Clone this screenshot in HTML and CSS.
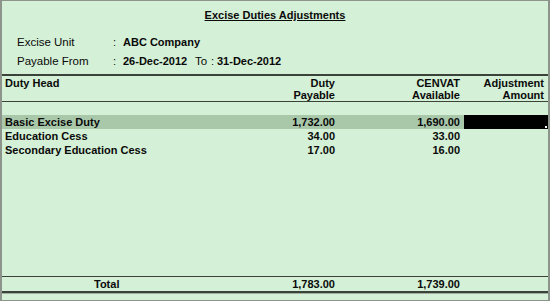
FILE: index.html
```html
<!DOCTYPE html>
<html lang="en">
<head>
  <meta charset="UTF-8">
  <title>Excise Duties Adjustments</title>
  <link rel="stylesheet" href="styles.css">
</head>
<body>
  <main class="screen">
    <header class="head">
      <h1 class="title">Excise Duties Adjustments</h1>
      <div class="info">
        <span class="label">Excise Unit</span>
        <span class="colon">:</span>
        <span class="value">ABC Company</span>
      </div>
      <div class="info">
        <span class="label">Payable From</span>
        <span class="colon">:</span>
        <span class="value from">26-Dec-2012</span>
        <span class="to">To</span>
        <span class="colon2">:</span>
        <span class="value">31-Dec-2012</span>
      </div>
    </header>

    <section class="cols">
      <div class="cell name">Duty Head</div>
      <div class="cell num">Duty<br>Payable</div>
      <div class="cell num">CENVAT<br>Available</div>
      <div class="cell num">Adjustment<br>Amount</div>
    </section>

    <section class="rows">
      <div class="row active">
        <div class="cell name">Basic Excise Duty</div>
        <div class="cell num">1,732.00</div>
        <div class="cell num">1,690.00</div>
        <div class="cell num input"></div>
      </div>
      <div class="row">
        <div class="cell name">Education Cess</div>
        <div class="cell num">34.00</div>
        <div class="cell num">33.00</div>
        <div class="cell num"></div>
      </div>
      <div class="row">
        <div class="cell name">Secondary Education Cess</div>
        <div class="cell num">17.00</div>
        <div class="cell num">16.00</div>
        <div class="cell num"></div>
      </div>
    </section>

    <footer class="total">
      <div class="cell name total-label">Total</div>
      <div class="cell num">1,783.00</div>
      <div class="cell num">1,739.00</div>
      <div class="cell num"></div>
    </footer>
    <div class="tail"></div>
  </main>
</body>
</html>
```

FILE: styles.css
```css
body {
  margin: 0;
  font-family: "Liberation Sans", Arial, sans-serif;
  font-size: 11px;
  color: #0a0a0a;
}
.screen {
  box-sizing: border-box;
  width: 550px;
  height: 301px;
  display: flex;
  flex-direction: column;
  background: #d4f0d6;
  border-top: 1px solid #8c948c;
  border-left: 2px solid #8c948c;
  border-right: 2px solid #8c948c;
  border-bottom: 1px solid #8c948c;
}
.head {
  height: 73px;
}
.title {
  margin: 7px 0 0;
  font-size: 11px;
  line-height: 14px;
  text-align: center;
  text-decoration: underline;
}
.info {
  display: flex;
  line-height: 19px;
  padding-left: 15px;
}
.title + .info {
  margin-top: 11px;
}
.label {
  width: 96px;
  font-size: 11.5px;
}
.colon {
  width: 10px;
}
.value {
  font-weight: bold;
}
.from {
  width: 72px;
}
.to {
  width: 16px;
  font-size: 11.5px;
}
.colon2 {
  width: 6px;
}

.cols,
.row,
.total {
  display: grid;
  grid-template-columns: 253px 84px 125px 84px;
  font-weight: bold;
}
.cell {
  line-height: 14px;
}
.name {
  padding-left: 3px;
}
.num {
  text-align: right;
  padding-right: 4px;
}

.cols {
  border-top: 2px solid #3a423a;
  border-bottom: 1px solid #3a423a;
  padding: 1px 0 0;
}
.cols .cell {
  line-height: 12px;
}

.rows {
  flex: 1;
  padding-top: 13px;
}
.row.active {
  background: #a9c8aa;
}
.input {
  position: relative;
  background: #000;
}
.input::after {
  content: "";
  position: absolute;
  right: 1px;
  bottom: 1px;
  width: 2px;
  height: 2px;
  background: #fff;
}

.total {
  border-top: 1px solid #3a423a;
  border-bottom: 2px solid #3a423a;
}
.total-label {
  padding-left: 92px;
}
.tail {
  height: 6px;
  border-top: 1px solid #9fb09f;
}
```
